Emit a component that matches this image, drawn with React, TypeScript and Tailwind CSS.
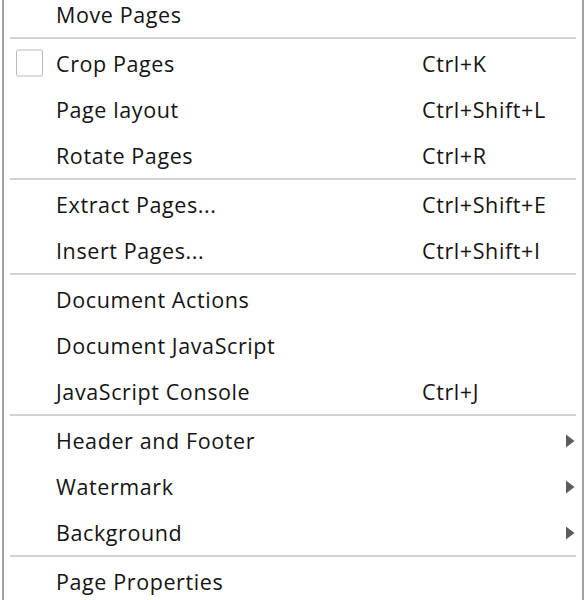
import { ReactNode } from "react";

type Item =
  | { kind: "sep" }
  | {
      kind: "item";
      label: string;
      shortcut?: string;
      sub?: boolean;
      check?: boolean;
    };

const items: Item[] = [
  { kind: "item", label: "Move Pages" },
  { kind: "sep" },
  { kind: "item", label: "Crop Pages", shortcut: "Ctrl+K", check: true },
  { kind: "item", label: "Page layout", shortcut: "Ctrl+Shift+L" },
  { kind: "item", label: "Rotate Pages", shortcut: "Ctrl+R" },
  { kind: "sep" },
  { kind: "item", label: "Extract Pages...", shortcut: "Ctrl+Shift+E" },
  { kind: "item", label: "Insert Pages...", shortcut: "Ctrl+Shift+I" },
  { kind: "sep" },
  { kind: "item", label: "Document Actions" },
  { kind: "item", label: "Document JavaScript" },
  { kind: "item", label: "JavaScript Console", shortcut: "Ctrl+J" },
  { kind: "sep" },
  { kind: "item", label: "Header and Footer", sub: true },
  { kind: "item", label: "Watermark", sub: true },
  { kind: "item", label: "Background", sub: true },
  { kind: "sep" },
  { kind: "item", label: "Page Properties" },
];

function Arrow() {
  return (
    <svg width="10" height="14" viewBox="0 0 10 14">
      <path d="M1 0.5 L9.5 7 L1 13.5 Z" fill="#5c5c5c" />
    </svg>
  );
}

function Row({ children }: { children: ReactNode }) {
  return (
    <div className="relative flex h-[46px] items-center pl-[52px] pt-[5px]">
      {children}
    </div>
  );
}

export default function App() {
  return (
    <div className="h-[600px] w-[586px] overflow-hidden bg-white">
      <div
        className="ml-[2px] h-[620px] w-[582px] border-x-[2px] border-[#a3a3a3] text-[21.5px] tracking-[0.6px] text-[#141414]"
        style={{ fontFamily: '"Open Sans", "Noto Sans", sans-serif' }}
      >
        <div className="-mt-[10px]">
          {items.map((item, i) =>
            item.kind === "sep" ? (
              <div
                key={i}
                className="flex h-[3px] items-center px-[6px]"
              >
                <div className="h-[2px] w-full bg-[#d2d2d2]" />
              </div>
            ) : (
              <Row key={i}>
                {item.check && (
                  <div className="absolute left-[12px] top-[calc(50%+1px)] h-[27px] w-[27px] -translate-y-1/2 rounded-[2px] border-[1.5px] border-[#b9b9b9] bg-white" />
                )}
                <span className="w-[366px] shrink-0">{item.label}</span>
                {item.shortcut && <span>{item.shortcut}</span>}
                {item.sub && (
                  <div className="absolute right-[7px] top-[calc(50%+2px)] flex -translate-y-1/2">
                    <Arrow />
                  </div>
                )}
              </Row>
            )
          )}
        </div>
      </div>
    </div>
  );
}
